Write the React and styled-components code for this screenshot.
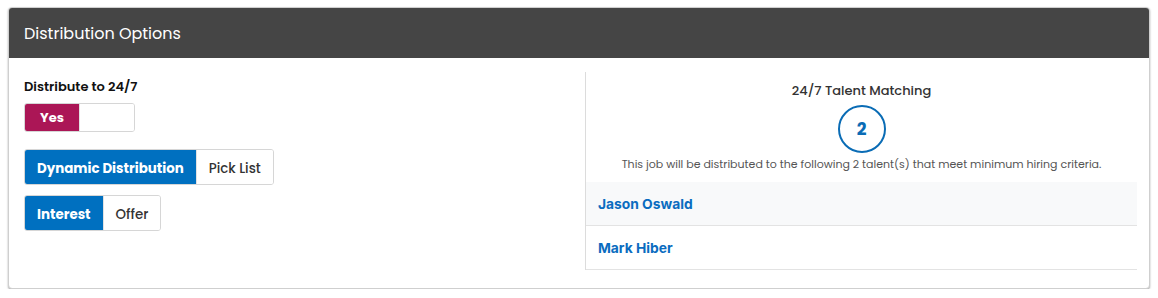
import React, { useState } from "react";
import styled, { createGlobalStyle } from "styled-components";

const GlobalStyle = createGlobalStyle`
  body {
    margin: 0;
    background: #ffffff;
    font-family: "Poppins", Inter, "Noto Sans", sans-serif;
  }
`;

const Page = styled.div`
  padding: 7px 8px 0 8px;
`;

const Card = styled.div`
  border: 1px solid #cfcfcf;
  border-radius: 4px;
  box-shadow: 0 1px 2px rgba(0, 0, 0, 0.35);
  overflow: hidden;
  background: #fff;
`;

const Header = styled.div`
  height: 50px;
  background: #454545;
  color: #fff;
  display: flex;
  align-items: center;
  padding: 0 15px;
  font-size: 16px;
  font-weight: 400;
`;

const Body = styled.div`
  display: grid;
  grid-template-columns: 561px 1fr;
  padding: 14px 12px 18px 15px;
`;

const Left = styled.div`
  display: flex;
  flex-direction: column;
  align-items: flex-start;
  padding-top: 5px;
`;

const Label = styled.div`
  font-size: 13px;
  font-weight: 600;
  color: #111;
  margin-bottom: 6px;
`;

const Group = styled.div`
  display: flex;
  border: 1px solid #d6d6d6;
  border-radius: 3px;
  overflow: hidden;
  margin-bottom: ${(p) => p.$mb || 0}px;
`;

const Seg = styled.button`
  border: none;
  font-family: inherit;
  height: ${(p) => p.$h}px;
  min-width: ${(p) => p.$w || 0}px;
  padding: ${(p) => (p.$small ? "0 12px" : "3px 12px 0")};
  font-size: ${(p) => (p.$small ? 13 : 13.4)}px;
  font-weight: ${(p) => (p.$on ? 700 : 500)};
  background: ${(p) => (p.$on ? p.$color : "#fff")};
  color: ${(p) => (p.$on ? "#fff" : "#333")};
  cursor: pointer;
  & + & {
    border-left: 1px solid #e2e2e2;
  }
`;

const Right = styled.div`
  border-left: 1px solid #dcdcdc;
  display: flex;
  flex-direction: column;
  align-items: stretch;
`;

const Title = styled.div`
  text-align: center;
  font-size: 13px;
  font-weight: 500;
  color: #333;
  margin-top: 9px;
`;

const Count = styled.div`
  align-self: center;
  width: 44px;
  height: 44px;
  border: 2px solid #0a6cb5;
  border-radius: 50%;
  display: flex;
  align-items: center;
  justify-content: center;
  color: #0a6cb5;
  font-size: 17px;
  font-weight: 700;
  margin-top: 4px;
`;

const Note = styled.div`
  text-align: center;
  font-size: 11px;
  color: #555;
  margin-top: 3px;
  margin-bottom: 9px;
`;

const Row = styled.div`
  height: 43px;
  display: flex;
  align-items: center;
  padding: 0 12px;
  background: ${(p) => (p.$alt ? "#f8f9fa" : "#fff")};
  border-bottom: 1px solid #e3e3e3;
  font-family: Inter, "Noto Sans", sans-serif;
  font-size: 13.8px;
  font-weight: 700;
  color: #0a6cc0;
`;

export default function App() {
  const [yes, setYes] = useState(true);
  const [mode, setMode] = useState("dynamic");
  const [kind, setKind] = useState("interest");
  const talents = ["Jason Oswald", "Mark Hiber"];

  return (
    <Page>
      <GlobalStyle />
      <Card>
        <Header>Distribution Options</Header>
        <Body>
          <Left>
            <Label>Distribute to 24/7</Label>
            <Group $mb={17}>
              <Seg $h={27} $w={54} $small $on={yes} $color="#ab1656" onClick={() => setYes(true)}>
                Yes
              </Seg>
              <Seg $h={27} $w={55} $small $on={!yes} $color="#ab1656" onClick={() => setYes(false)}>
                {yes ? "" : "No"}
              </Seg>
            </Group>
            <Group $mb={10}>
              <Seg $h={34} $on={mode === "dynamic"} $color="#0070c0" onClick={() => setMode("dynamic")}>
                Dynamic Distribution
              </Seg>
              <Seg $h={34} $on={mode === "pick"} $color="#0070c0" onClick={() => setMode("pick")}>
                Pick List
              </Seg>
            </Group>
            <Group>
              <Seg $h={34} $on={kind === "interest"} $color="#0070c0" onClick={() => setKind("interest")}>
                Interest
              </Seg>
              <Seg $h={34} $on={kind === "offer"} $color="#0070c0" onClick={() => setKind("offer")}>
                Offer
              </Seg>
            </Group>
          </Left>
          <Right>
            <Title>24/7 Talent Matching</Title>
            <Count>2</Count>
            <Note>
              This job will be distributed to the following 2 talent(s) that meet minimum hiring criteria.
            </Note>
            {talents.map((t, i) => (
              <Row key={t} $alt={i % 2 === 0}>
                {t}
              </Row>
            ))}
          </Right>
        </Body>
      </Card>
    </Page>
  );
}
